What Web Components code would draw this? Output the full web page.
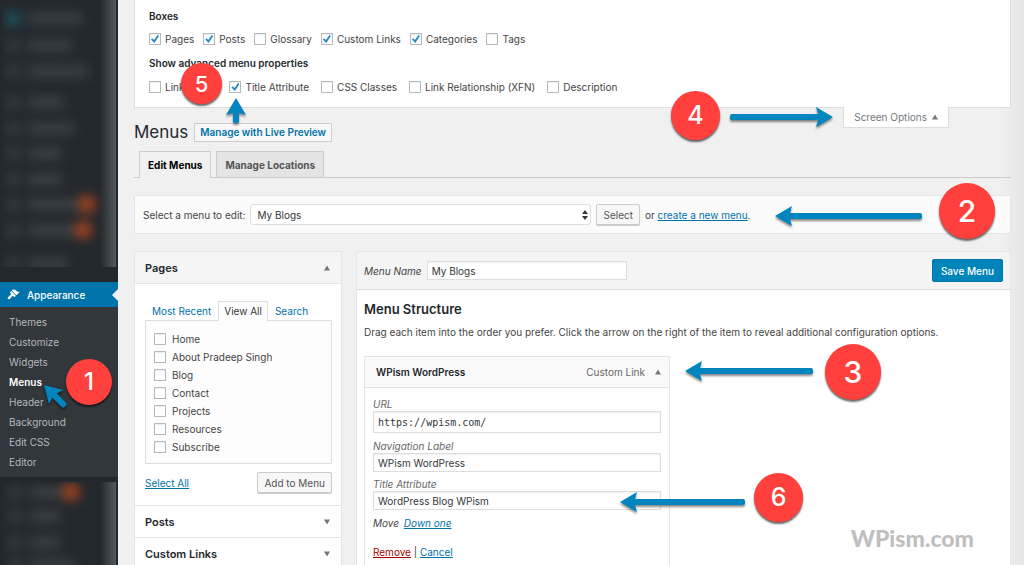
<!DOCTYPE html>
<html lang="en">
<head>
<meta charset="utf-8">
<meta name="viewport" content="width=device-width, initial-scale=1">
<title>Menus</title>
<style>
  html { height: 100%; }
  body {
    margin: 0; min-height: 100%; height: 100%; overflow: hidden;
    font: 10px/14px Inter, "Liberation Sans", sans-serif; color: #444; background: #f0f0f0;
  }
</style>
</head>
<body>
<wp-menus-page></wp-menus-page>

<script>
const base = `*{box-sizing:border-box} button,input,select{font:inherit;color:inherit;margin:0}
a{color:#0073aa} h1,h2,h3,p,ul{margin:0;padding:0}`;

function define(name, render, after) {
  customElements.define(name, class extends HTMLElement {
    constructor() { super(); this.attachShadow({ mode: 'open' }); }
    connectedCallback() {
      if (this.shadowRoot.firstChild) return;
      const t = document.createElement('template');
      const get = (k, d = '') => this.getAttribute(k) ?? d;
      t.innerHTML = render(get, this).replace('<style>', '<style>' + base);
      this.shadowRoot.append(t.content.cloneNode(true));
      if (after) after(this);
    }
  });
}

/* Tick box with its label */
define('wp-check', (get, el) => `<style>
  :host{display:block}
  label{display:flex;align-items:center;gap:var(--check-gap,4px);line-height:inherit;white-space:nowrap}
  input{appearance:none;flex:none;position:relative;width:12px;height:12px;border:1px solid #b4b9be;background:#fff;box-shadow:inset 0 1px 1px #0001}
  input:checked::before{content:"";display:block;width:8px;height:8px;margin:1px;background:#1e8cbe;
    clip-path:polygon(0 55%,16% 40%,38% 62%,82% 0,100% 12%,42% 100%)}
</style><label><input type="checkbox" ${el.hasAttribute('checked') ? 'checked' : ''}><slot></slot></label>`);

/* Push button */
define('wp-button', get => {
  const looks = {
    plain: 'border:1px solid #ccc;background:#f7f7f7;color:#555;box-shadow:0 1px 0 #ccc;border-radius:2px;height:21px;padding:0 6px',
    primary: 'border:1px solid #0073aa;background:#0085ba;color:#fff;border-radius:2px;height:23px;padding:0 8px;font-weight:500',
    outline: 'border:1px solid #ccc;background:#f7f7f7;color:#0073aa;border-radius:1px;height:19px;padding:0 5px;font-weight:600'
  };
  return `<style>:host{display:block;flex:none}
  button{display:block;white-space:nowrap;${looks[get('look', 'plain')]}}</style>
  <button type="button"><slot></slot></button>`;
});

/* Small disclosure triangle */
define('wp-caret', get => `<style>:host{display:block;flex:none;width:6px;height:6px}svg{display:block}</style>
  <svg width="6" height="6" viewBox="0 0 6 6"><path fill="#72777c" d="${get('dir') === 'up' ? 'M0 5.5L3 .5L6 5.5Z' : 'M0 .5L3 5.5L6 .5Z'}"/></svg>`);

/* Text field; the label stands above the box or beside it */
define('wp-field', (get, el) => `<style>
  :host{display:block}
  .wrap{display:flex;flex-direction:${el.hasAttribute('inline') ? 'row' : 'column'};${el.hasAttribute('inline') ? 'align-items:center;gap:5px' : ''}}
  label{font-style:italic;color:${el.hasAttribute('inline') ? '#444' : '#666'}}
  input{width:${el.hasAttribute('inline') ? '200px' : '100%'};height:${el.hasAttribute('mono') ? 22 : 19}px;padding:0 4px;border:1px solid #ddd;background:#fff;color:#32373c;
    box-shadow:inset 0 1px 2px #0001;${el.hasAttribute('mono') ? 'font-family:"DejaVu Sans Mono",monospace' : ''}}
</style><div class="wrap"><label for="f">${get('label')}</label><input id="f" type="text" value="${get('value')}"></div>`);

/* Softened group of menu rows */
define('wp-blurred', get => {
  const rows = get('rows').split(' ').map(r => {
    const [h, w, dot] = r.split(':');
    return `<li style="height:${h}px"><i></i><b style="width:${w}px"></b>${dot ? '<u></u>' : ''}</li>`;
  }).join('');
  return `<style>
  :host{display:block;overflow:hidden;margin:0 2px;background:linear-gradient(90deg,#23282d 86%,#55595d)}
  ul{list-style:none;filter:blur(6px);padding-left:4px}
  li{display:flex;align-items:center;gap:8px}
  i{width:14px;height:13px;border-radius:6px;background:#555a5f77}
  li:first-child i{background:var(--first,#555a5f77)}
  b{height:11px;background:#666b7066}
  u{width:18px;height:18px;border-radius:9px;background:#a8431f;margin-left:-8px}
</style><ul>${rows}</ul>`;
});

define('wp-sidebar', () => `<style>
  :host{display:flex;flex-direction:column;background:#23282d;overflow:hidden}
  .top{height:267px;--first:#1d5f6a}
  .current{display:flex;align-items:center;gap:7px;height:25px;margin-top:15px;padding-left:7px;background:#0073aa;color:#fff;text-decoration:none;font-weight:500;flex:none}
  .current::after{content:"";margin-left:auto;border:6px solid transparent;border-left:0;border-right-color:#f0f0f0}
  nav ul{list-style:none;background:#32373c;padding:5px 0}
  nav ul a{display:block;height:20px;line-height:20px;padding-left:9px;color:#b4b9be;text-decoration:none}
  nav ul a[aria-current]{color:#fff;font-weight:600}
  .low{margin:5px 2px 0 4px;flex:1;min-height:0}
</style>
<wp-blurred class="top" rows="36:54 18:44 34:60 28:36 24:46 26:34 26:34 24:50:1 28:46:1 38:40"></wp-blurred>
<nav aria-label="Admin">
  <a class="current" href="#appearance">
    <svg width="13" height="13" viewBox="0 0 20 20" fill="currentColor"><path d="M14.48 11.06L7.41 3.99l1.5-1.5c.5-.56 2.3-.47 3.51.32 1.21.8 1.43 1.28 2.91 2.1 1.18.64 2.45 1.26 4.45.85zm-.71.71L6.7 4.7 4.93 6.47c-.39.39-.39 1.02 0 1.41l1.06 1.06c.39.39.39 1.03 0 1.42-.6.6-1.43 1.11-2.21 1.69-.35.26-.7.53-1.01.84C1.43 14.23.4 16.08 1.4 17.07c.99 1 2.84-.03 4.18-1.36.31-.31.58-.66.85-1.02.57-.78 1.08-1.61 1.69-2.21.39-.39 1.02-.39 1.41 0l1.06 1.06c.39.39 1.02.39 1.41 0z"/></svg>
    Appearance</a>
  <ul>
    <li><a href="#themes">Themes</a></li><li><a href="#customize">Customize</a></li><li><a href="#widgets">Widgets</a></li>
    <li><a href="#menus" aria-current="page">Menus</a></li><li><a href="#header">Header</a></li>
    <li><a href="#background">Background</a></li><li><a href="#css">Edit CSS</a></li><li><a href="#editor">Editor</a></li>
  </ul>
</nav>
<wp-blurred class="low" rows="20:32:1 28:30 24:30 22:44"></wp-blurred>`);

define('wp-screen-meta', () => `<style>
  :host{display:block;background:#fff;border:1px solid #ddd;border-top:0;padding:8px 14px 12px}
  h2{font-size:10px;line-height:16px;font-weight:600;color:#23282d}
  .row{display:flex;flex-wrap:wrap;gap:9px;line-height:16px;padding:7px 0 8px}
  .row:last-child{gap:12px;padding-bottom:0;padding-top:8px}
</style>
<h2>Boxes</h2>
<div class="row"><wp-check checked>Pages</wp-check><wp-check checked>Posts</wp-check><wp-check>Glossary</wp-check><wp-check checked>Custom Links</wp-check><wp-check checked>Categories</wp-check><wp-check>Tags</wp-check></div>
<h2>Show advanced menu properties</h2>
<div class="row"><wp-check>Link Target</wp-check><wp-check checked>Title Attribute</wp-check><wp-check>CSS Classes</wp-check><wp-check>Link Relationship (XFN)</wp-check><wp-check>Description</wp-check></div>`);

define('wp-heading', () => `<style>
  :host{display:flex;align-items:flex-start;justify-content:space-between;height:43px}
  .title{display:flex;align-items:center;gap:6px;padding-top:13px}
  h1{font-size:17px;line-height:22px;font-weight:400;color:#23282d}
  .options{display:flex;align-items:center;gap:5px;height:21px;margin:-1px 62px 0 0;padding:0 10px;border:1px solid #ddd;border-top:0;background:#fff;color:#72777c}
</style>
<div class="title"><h1>Menus</h1><wp-button look="outline">Manage with Live Preview</wp-button></div>
<button class="options" type="button" aria-expanded="true">Screen Options <wp-caret dir="up"></wp-caret></button>`);

define('wp-tabs', () => `<style>
  :host{display:flex;gap:5px;padding-left:5px;border-bottom:1px solid #ccc}
  a{height:26px;line-height:26px;padding:0 8px;border:1px solid #ccc;border-bottom:0;background:#e4e4e4;color:#555;font-size:10px;font-weight:700;text-decoration:none;white-space:nowrap}
  a[aria-current]{background:#f0f0f0;color:#000;margin-bottom:-1px;height:27px}
</style><a href="#edit" aria-current="page">Edit Menus</a><a href="#locations">Manage Locations</a>`);

define('wp-menu-picker', () => `<style>
  :host{display:flex;align-items:center;gap:5px;height:39px;margin-top:17px;padding:0 8px;background:#fbfbfb;border:1px solid #e5e5e5}
  .pick{position:relative;width:341px}
  select{appearance:none;width:100%;height:21px;padding:0 6px;border:1px solid #ddd;border-radius:3px;background:#fff;color:#32373c}
  svg{position:absolute;right:3px;top:6px}
</style>
<label for="menu">Select a menu to edit:</label>
<div class="pick"><select id="menu"><option>My Blogs</option></select>
<svg width="6" height="10" viewBox="0 0 6 10"><path fill="#32373c" d="M0 4L3 0L6 4ZM0 6L3 10L6 6Z"/></svg></div>
<wp-button>Select</wp-button><span>or <a href="#new">create a new menu</a>.</span>`);

/* Collapsible section of the left column */
define('wp-section', (get, el) => `<style>
  :host{display:block;border-top:1px solid #e5e5e5}
  h3{font-size:11px;line-height:16px;font-weight:600;color:#23282d}
  button{display:flex;align-items:center;justify-content:space-between;width:100%;height:31px;padding:0 11px 0 10px;border:0;background:${el.hasAttribute('open') ? '#f5f5f5' : '#fff'};font-weight:600}
  .body{padding:17px 9px 12px 10px;border-top:1px solid #e5e5e5;background:#fff}
</style><h3><button type="button" aria-expanded="${el.hasAttribute('open')}">${get('heading')}<wp-caret dir="${el.hasAttribute('open') ? 'up' : 'down'}"></wp-caret></button></h3>
${el.hasAttribute('open') ? '<div class="body"><slot></slot></div>' : ''}`);

define('wp-page-list', () => `<style>
  :host{display:block}
  .tabs{display:flex;height:19px;line-height:18px}
  .tabs a{padding:0 6px;border:1px solid transparent;border-bottom:0;text-decoration:none;white-space:nowrap}
  .tabs a[aria-current]{background:#fdfdfd;border-color:#ddd;color:#32373c;height:20px;padding:0 5px}
  .list{border:1px solid #ddd;background:#fdfdfd;padding:9px 8px 7px;line-height:18px;--check-gap:6px}
  .foot{display:flex;align-items:center;justify-content:space-between;margin-top:8px}
</style>
<div class="tabs"><a href="#recent">Most Recent</a><a href="#all" aria-current="true">View All</a><a href="#search">Search</a></div>
<div class="list"><wp-check>Home</wp-check><wp-check>About Pradeep Singh</wp-check><wp-check>Blog</wp-check><wp-check>Contact</wp-check><wp-check>Projects</wp-check><wp-check>Resources</wp-check><wp-check>Subscribe</wp-check></div>
<div class="foot"><a href="#select-all">Select All</a><wp-button>Add to Menu</wp-button></div>`);

define('wp-menu-item', () => `<style>
  :host{display:block;max-width:306px;border:1px solid #e5e5e5;background:#fff}
  header{display:flex;align-items:center;gap:10px;height:31px;padding:0 8px 0 11px;background:#fafafa;border-bottom:1px solid #e5e5e5;color:#666}
  h3{margin-right:auto;font-size:10px;font-weight:600;color:#23282d}
  .body{padding:9px 8px;display:flex;flex-direction:column;gap:5px}
  .body .first{margin-bottom:1px}
  .move{font-style:italic;padding-top:1px}
  .move a{margin-left:2px}
  .end{padding-top:10px}
  .remove{color:#a00}
</style>
<header><h3>WPism WordPress</h3><span>Custom Link</span><wp-caret dir="up"></wp-caret></header>
<div class="body">
  <wp-field class="first" mono label="URL" value="https://wpism.com/"></wp-field>
  <wp-field label="Navigation Label" value="WPism WordPress"></wp-field>
  <wp-field label="Title Attribute" value="WordPress Blog WPism"></wp-field>
  <p class="move">Move <a href="#down">Down one</a></p>
  <p class="end"><a class="remove" href="#remove">Remove</a> | <a href="#cancel">Cancel</a></p>
</div>`);

define('wp-menu-editor', () => `<style>
  :host{display:block;background:#fff;border:1px solid #e5e5e5}
  header{display:flex;align-items:center;justify-content:space-between;height:38px;padding:0 7px;background:#f4f4f4;border-bottom:1px solid #ddd}
  .body{padding:10px 7px}
  h2{font-size:13px;line-height:18px;font-weight:600;color:#23282d}
  p{line-height:16px;margin:6px 0 16px}
</style>
<header><wp-field inline label="Menu Name" value="My Blogs"></wp-field><wp-button look="primary">Save Menu</wp-button></header>
<div class="body"><h2>Menu Structure</h2>
<p>Drag each item into the order you prefer. Click the arrow on the right of the item to reveal additional configuration options.</p>
<wp-menu-item></wp-menu-item></div>`);

/* Numbered callout and pointing arrow, laid freely over the page */
define('note-badge', get => `<style>
  :host{position:absolute;display:grid;place-items:center;border-radius:50%;background:#ff403c;color:#fff;box-shadow:0 2px 2px #0009;font-weight:500;line-height:1}
</style><slot></slot>`, el => {
  const [x, y, d, s] = el.getAttribute('at').split(' ').map(Number);
  Object.assign(el.style, { left: x + 'px', top: y + 'px', width: d + 'px', height: d + 'px', fontSize: s + 'px' });
});
define('note-arrow', get => {
  const l = +get('length'), turn = +get('turn', '0');
  return `<style>:host{position:absolute}svg{display:block;overflow:visible;filter:drop-shadow(0 2px 1px #0007)}</style>
  <svg width="1" height="1"><g transform="rotate(${turn})" fill="#0085be"><path d="M0 0L17 -10L14 0L17 10Z"/><path d="M12 -3H${l - 2}q2 0 2 2v2q0 2 -2 2H12Z"/></g></svg>`;
}, el => {
  const [x, y] = el.getAttribute('at').split(' ').map(Number);
  Object.assign(el.style, { left: x + 'px', top: y + 'px' });
});
define('note-layer', () => `<style>
  :host{position:absolute;inset:0;pointer-events:none;overflow:hidden}
  .mark{position:absolute;right:50px;bottom:12px;font:900 23px/30px Lato,"Liberation Sans",sans-serif;color:#bfbfbf}
</style>
<note-arrow at="44 385" length="30" turn="45"></note-arrow>
<note-arrow at="775 216" length="147"></note-arrow>
<note-arrow at="685 371" length="128"></note-arrow>
<note-arrow at="833 117" length="103" turn="180"></note-arrow>
<note-arrow at="236 98" length="25" turn="90"></note-arrow>
<note-arrow at="620 502" length="125"></note-arrow>
<note-badge at="66 359 46 24">1</note-badge>
<note-badge at="939 183 56 30">2</note-badge>
<note-badge at="825 344 56 30">3</note-badge>
<note-badge at="671 91 49 25">4</note-badge>
<note-badge at="181 63 41 22">5</note-badge>
<note-badge at="754 473 49 25">6</note-badge>
<span class="mark">WPism.com</span>`);

define('wp-menus-page', () => `<style>
  :host{position:relative;display:grid;grid-template-columns:118px minmax(0,1fr);height:100%;overflow:hidden}
  main{padding:0 13px 0 16px;background:linear-gradient(270deg,#e6e6e6,#f0f0f0 24px);min-width:0}
  .columns{display:grid;grid-template-columns:208px minmax(0,1fr);gap:14px;align-items:start;margin-top:17px}
  .side{border:1px solid #e5e5e5;border-top:0}
</style>
<wp-sidebar></wp-sidebar>
<main>
  <wp-screen-meta></wp-screen-meta>
  <wp-heading></wp-heading>
  <wp-tabs></wp-tabs>
  <wp-menu-picker></wp-menu-picker>
  <div class="columns">
    <div class="side">
      <wp-section heading="Pages" open><wp-page-list></wp-page-list></wp-section>
      <wp-section heading="Posts"></wp-section>
      <wp-section heading="Custom Links"></wp-section>
    </div>
    <wp-menu-editor></wp-menu-editor>
  </div>
</main>
<note-layer></note-layer>`);
</script>
</body>
</html>
